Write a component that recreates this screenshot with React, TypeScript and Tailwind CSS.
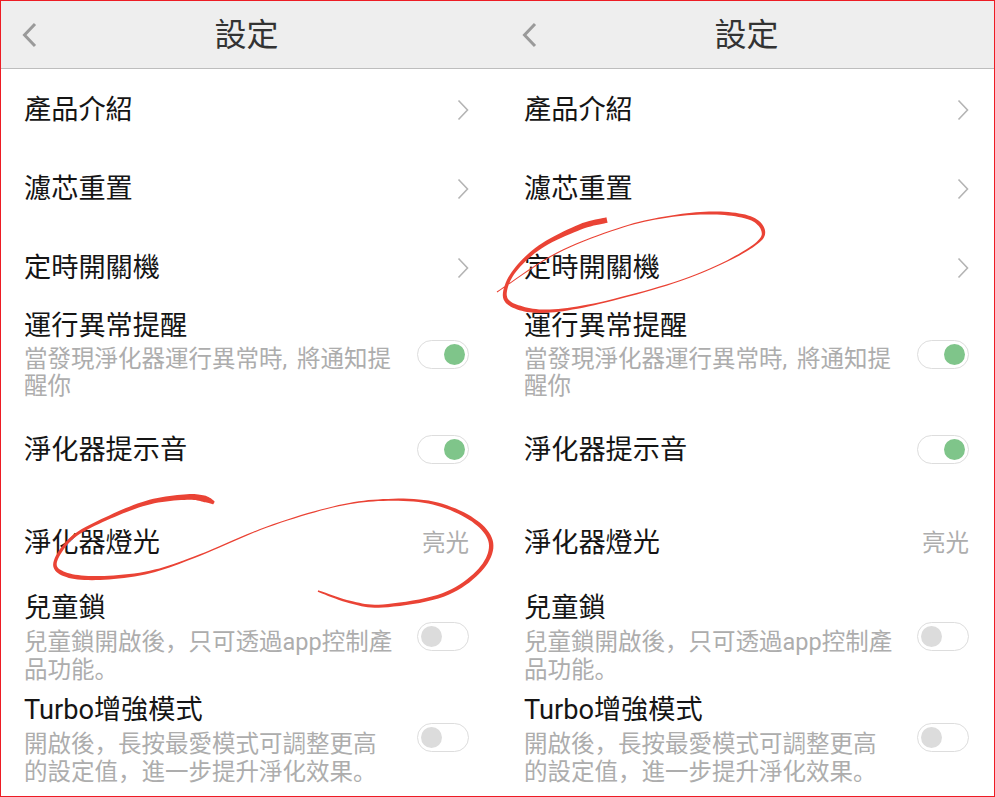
import React from "react";

type P = [number, number, number];

function ribbon(pts: P[]): string {
  const s: P[] = [];
  const at = (i: number) => pts[Math.max(0, Math.min(pts.length - 1, i))];
  for (let i = 0; i < pts.length - 1; i++) {
    const [a, b, c, d] = [at(i - 1), at(i), at(i + 1), at(i + 2)];
    for (let k = 0; k < 10; k++) {
      const t = k / 10;
      const f = (j: number) =>
        0.5 * (2 * b[j] + (c[j] - a[j]) * t + (2 * a[j] - 5 * b[j] + 4 * c[j] - d[j]) * t * t + (3 * b[j] - a[j] - 3 * c[j] + d[j]) * t * t * t);
      s.push([f(0), f(1), b[2] + (c[2] - b[2]) * t]);
    }
  }
  s.push(pts[pts.length - 1]);
  const L: string[] = [];
  const R: string[] = [];
  s.forEach((p, i) => {
    const q = s[Math.min(i + 1, s.length - 1)];
    const o = s[Math.max(i - 1, 0)];
    const dx = q[0] - o[0];
    const dy = q[1] - o[1];
    const n = Math.hypot(dx, dy) || 1;
    const w = p[2] / 2;
    L.push(`${(p[0] - (dy / n) * w).toFixed(1)} ${(p[1] + (dx / n) * w).toFixed(1)}`);
    R.unshift(`${(p[0] + (dy / n) * w).toFixed(1)} ${(p[1] - (dx / n) * w).toFixed(1)}`);
  });
  return "M" + L.concat(R).join("L") + "Z";
}

const leftMark: P[] = [
  [214, 503, 3], [205, 499, 6.5], [187, 497, 5.5], [150, 502, 4.5], [110, 517, 3.5], [73, 537, 3], [55, 563, 3.5], [67, 575, 4.5], [100, 578, 4],
  [150, 572, 2.5], [200, 555, 1.4], [267, 527, 1.2], [333, 507, 1.2], [383, 500, 1.8], [433, 503, 3.2], [473, 520, 4], [491, 543, 4.5],
  [480, 570, 4], [443, 595, 3.8], [383, 606, 3.2], [350, 602, 2.6], [318, 591, 1.6],
];
const rightMark: P[] = [
  [607, 220, 5.5], [580, 227, 5.5], [540, 247, 4], [513, 273, 3.2], [505, 297, 4], [520, 308, 4.5], [550, 311, 3.2],
  [600, 303, 1.7], [673, 283, 1.2], [723, 263, 1.2], [757, 243, 2.2], [763, 230, 3.8], [750, 218, 3.8], [717, 213, 3.2],
  [673, 216, 1.7], [623, 227, 1.1], [557, 253, 1.1], [497, 292, 0.9],
];

function Chevron() {
  return (
    <svg width="14" height="24" viewBox="0 0 14 24" fill="none" className="shrink-0">
      <path d="M2.5 2.5 L11.5 12 L2.5 21.5" stroke="#b4b4b4" strokeWidth="1.6" />
    </svg>
  );
}

function Toggle({ on }: { on?: boolean }) {
  return (
    <div className={`flex h-[29px] w-[52px] shrink-0 items-center rounded-full border border-[#dddddd] bg-white px-[3px] ${on ? "justify-end" : "justify-start"}`}>
      <div className={`h-[21px] w-[21px] rounded-full ${on ? "bg-[#7fc58a]" : "bg-[#dcdcdc]"}`} />
    </div>
  );
}

function LinkRow({ label }: { label: string }) {
  return (
    <div className="flex h-[79px] items-center justify-between pl-[23px] pr-[31px]">
      <span className="text-[27.2px] leading-[34px] text-[#151515]">{label}</span>
      <Chevron />
    </div>
  );
}

function DescRow({ h, pt, title, lines, on, pb, lh }: { h: string; pt: string; title: string; lines: string[]; on?: boolean; pb?: string; lh: string }) {
  return (
    <div className={`flex items-center justify-between pl-[23px] pr-[32px] ${h} ${pb ?? ""}`}>
      <div className={`self-start ${pt}`}>
        <div className="text-[27.2px] leading-[34px] text-[#151515]">{title}</div>
        <div className={`mt-[3px] text-[23.5px] text-[#adadad] [word-spacing:4px] ${lh}`}>
          {lines.map((l) => (
            <div key={l} className="whitespace-nowrap">{l}</div>
          ))}
        </div>
      </div>
      <Toggle on={on} />
    </div>
  );
}

function Panel() {
  return (
    <div className="flex w-[500px] shrink-0 flex-col">
      <header className="relative mb-px box-content flex h-[67px] items-center justify-center border-b border-[#bdbdbd] bg-[#eeeeee] pr-[9px]">
        <svg width="18" height="28" viewBox="0 0 18 28" fill="none" className="absolute left-[20px] top-[20px]">
          <path d="M14 3 L3.5 14 L14 25" stroke="#9a9a9a" strokeWidth="3" />
        </svg>
        <h1 className="text-[32px] leading-[40px] font-normal text-[#333333]">設定</h1>
      </header>
      <LinkRow label="產品介紹" />
      <LinkRow label="濾芯重置" />
      <LinkRow label="定時開關機" />
      <DescRow h="h-[94px]" pt="pt-[2px]" lh="leading-[27px]" title="運行異常提醒" lines={["當發現淨化器運行異常時, 將通知提", "醒你"]} on />
      <div className="flex h-[98px] items-center justify-between pl-[23px] pr-[32px]">
        <span className="text-[27.2px] leading-[34px] text-[#151515]">淨化器提示音</span>
        <div className="mb-[2px]">
          <Toggle on />
        </div>
      </div>
      <div className="flex h-[88px] items-center justify-between pl-[23px] pr-[32px]">
        <span className="text-[27.2px] leading-[34px] text-[#151515]">淨化器燈光</span>
        <span className="text-[23.5px] leading-[30px] text-[#adadad]">亮光</span>
      </div>
      <DescRow h="h-[104px]" pt="pt-[4px]" pb="pb-[6px]" lh="leading-[28px]" title="兒童鎖" lines={["兒童鎖開啟後，只可透過app控制產", "品功能。"]} />
      <DescRow h="h-[96px]" pt="pt-[2px]" pb="pb-[4px]" lh="leading-[28px]" title="Turbo增強模式" lines={["開啟後，長按最愛模式可調整更高", "的設定值，進一步提升淨化效果。"]} />
    </div>
  );
}

export default function App() {
  return (
    <div className="relative h-[797px] w-[995px] overflow-hidden border border-[#ed1c24] bg-white font-['Roboto','Noto_Sans_CJK_SC',sans-serif]">
      <div className="flex">
        <Panel />
        <Panel />
      </div>
      <svg width="995" height="797" viewBox="0 0 995 797" className="pointer-events-none absolute -left-px -top-px">
        <path d={ribbon(leftMark)} fill="#ea4335" />
        <path d={ribbon(rightMark)} fill="#ea4335" />
      </svg>
    </div>
  );
}
